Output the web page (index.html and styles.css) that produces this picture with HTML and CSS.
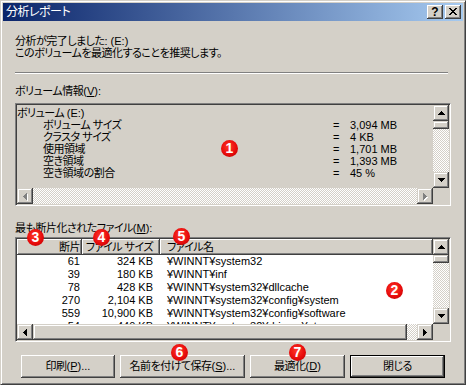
FILE: index.html
```
<!DOCTYPE html>
<html lang="ja">
<head>
<meta charset="utf-8">
<title>分析レポート</title>
<link rel="stylesheet" href="styles.css">
</head>
<body>
<div class="window">
  <div class="titlebar">
    <span class="title">分析レポート</span>
    <div class="caps">
      <div class="cap help">?</div>
      <div class="cap close">
        <svg width="8" height="7" viewBox="0 0 8 7" shape-rendering="crispEdges"><path d="M0 0h2v1h-2zM6 0h2v1h-2zM1 1h2v1h-2zM5 1h2v1h-2zM2 2h4v1h-4zM3 3h2v1h-2zM2 4h4v1h-4zM1 5h2v1h-2zM5 5h2v1h-2zM0 6h2v1h-2zM6 6h2v1h-2z" fill="#000"/></svg>
      </div>
    </div>
  </div>
  <div class="client">
    <p class="msg">分析が完了しました<span class="en">: (E:)</span><br>このボリュームを最適化することを推奨します。</p>
    <div class="sep"></div>
    <div class="label">ボリューム情報<span class="en">(<u>V</u>):</span></div>
    <div class="field vol">
      <div class="field-body vol-body">
        <div class="vol-line">ボリューム <span class="en">(E:)</span></div>
        <div class="vol-row"><span class="k">ボリューム サイズ</span><span class="en">=</span><span class="en">3,094 MB</span></div>
        <div class="vol-row"><span class="k">クラスタ サイズ</span><span class="en">=</span><span class="en">4 KB</span></div>
        <div class="vol-row"><span class="k">使用領域</span><span class="en">=</span><span class="en">1,701 MB</span></div>
        <div class="vol-row"><span class="k">空き領域</span><span class="en">=</span><span class="en">1,393 MB</span></div>
        <div class="vol-row"><span class="k">空き領域の割合</span><span class="en">=</span><span class="en">45 %</span></div>
      </div>
      <div class="vscroll">
        <div class="sbtn"><svg width="7" height="4" viewBox="0 0 7 4" shape-rendering="crispEdges"><path d="M3 0h1v1h-1zM2 1h3v1h-3zM1 2h5v1h-5zM0 3h7v1h-7z" fill="#000"/></svg></div>
        <div class="sbtn thumb-v"></div>
        <div class="track"></div>
        <div class="sbtn"><svg width="7" height="4" viewBox="0 0 7 4" shape-rendering="crispEdges"><path d="M0 0h7v1h-7zM1 1h5v1h-5zM2 2h3v1h-3zM3 3h1v1h-1z" fill="#000"/></svg></div>
      </div>
      <div class="hscroll">
        <div class="sbtn"><svg width="6" height="9" viewBox="0 0 6 9" shape-rendering="crispEdges"><path d="M3 0h1v1h-1zM2 1h2v1h-2zM1 2h3v1h-3zM0 3h4v1h-4zM1 4h3v1h-3zM2 5h2v1h-2zM3 6h1v1h-1z" fill="#fff" transform="translate(2,2)"/><path d="M3 0h1v1h-1zM2 1h2v1h-2zM1 2h3v1h-3zM0 3h4v1h-4zM1 4h3v1h-3zM2 5h2v1h-2zM3 6h1v1h-1z" fill="#808080" transform="translate(1,1)"/></svg></div>
        <div class="track"></div>
        <div class="sbtn"><svg width="6" height="9" viewBox="0 0 6 9" shape-rendering="crispEdges"><path d="M0 0h1v1h-1zM0 1h2v1h-2zM0 2h3v1h-3zM0 3h4v1h-4zM0 4h3v1h-3zM0 5h2v1h-2zM0 6h1v1h-1z" fill="#fff" transform="translate(2,2)"/><path d="M0 0h1v1h-1zM0 1h2v1h-2zM0 2h3v1h-3zM0 3h4v1h-4zM0 4h3v1h-3zM0 5h2v1h-2zM0 6h1v1h-1z" fill="#808080" transform="translate(1,1)"/></svg></div>
      </div>
      <div class="corner"></div>
    </div>

    <div class="label label2">最も断片化されたファイル<span class="en">(<u>M</u>):</span></div>
    <div class="field list">
      <div class="field-body list-body">
        <div class="lrow head">
          <div class="hc c1">断片</div>
          <div class="hc c2">ファイル サイズ</div>
          <div class="hc c3">ファイル名</div>
        </div>
        <div class="lrow"><span class="c1">61</span><span class="c2">324 KB</span><span class="c3">¥WINNT¥system32</span></div>
        <div class="lrow"><span class="c1">39</span><span class="c2">180 KB</span><span class="c3">¥WINNT¥inf</span></div>
        <div class="lrow"><span class="c1">78</span><span class="c2">428 KB</span><span class="c3">¥WINNT¥system32¥dllcache</span></div>
        <div class="lrow"><span class="c1">270</span><span class="c2">2,104 KB</span><span class="c3">¥WINNT¥system32¥config¥system</span></div>
        <div class="lrow"><span class="c1">559</span><span class="c2">10,900 KB</span><span class="c3">¥WINNT¥system32¥config¥software</span></div>
        <div class="lrow"><span class="c1">54</span><span class="c2">440 KB</span><span class="c3">¥WINNT¥system32¥drivers¥etc</span></div>
      </div>
      <div class="vscroll">
        <div class="sbtn"><svg width="7" height="4" viewBox="0 0 7 4" shape-rendering="crispEdges"><path d="M3 0h1v1h-1zM2 1h3v1h-3zM1 2h5v1h-5zM0 3h7v1h-7z" fill="#000"/></svg></div>
        <div class="sbtn thumb-v"></div>
        <div class="track"></div>
        <div class="sbtn"><svg width="7" height="4" viewBox="0 0 7 4" shape-rendering="crispEdges"><path d="M0 0h7v1h-7zM1 1h5v1h-5zM2 2h3v1h-3zM3 3h1v1h-1z" fill="#000"/></svg></div>
      </div>
      <div class="hscroll">
        <div class="sbtn"><svg width="4" height="7" viewBox="0 0 4 7" shape-rendering="crispEdges"><path d="M3 0h1v1h-1zM2 1h2v1h-2zM1 2h3v1h-3zM0 3h4v1h-4zM1 4h3v1h-3zM2 5h2v1h-2zM3 6h1v1h-1z" fill="#000"/></svg></div>
        <div class="sbtn thumb-h"></div>
        <div class="track"></div>
        <div class="sbtn"><svg width="4" height="7" viewBox="0 0 4 7" shape-rendering="crispEdges"><path d="M0 0h1v1h-1zM0 1h2v1h-2zM0 2h3v1h-3zM0 3h4v1h-4zM0 4h3v1h-3zM0 5h2v1h-2zM0 6h1v1h-1z" fill="#000"/></svg></div>
      </div>
      <div class="corner"></div>
    </div>

    <div class="buttons">
      <div class="btn w94">印刷<span class="en">(<u>P</u>)...</span></div>
      <div class="btn w125">名前を付けて保存<span class="en">(<u>S</u>)...</span></div>
      <div class="btn w95">最適化<span class="en">(<u>D</u>)</span></div>
      <div class="btn w95 default">閉じる</div>
    </div>
  </div>

  <span class="mark m1">1</span>
  <span class="mark m2">2</span>
  <span class="mark m3">3</span>
  <span class="mark m4">4</span>
  <span class="mark m5">5</span>
  <span class="mark m6">6</span>
  <span class="mark m7">7</span>
</div>
</body>
</html>
```
FILE: styles.css
```
* { box-sizing: border-box; margin: 0; padding: 0; }

html, body {
  width: 466px;
  height: 385px;
  overflow: hidden;
}

body {
  font-family: "Liberation Sans", "Noto Sans CJK JP", sans-serif;
  font-feature-settings: "palt";
  font-size: 11px;
  letter-spacing: -0.5px;
  color: #000;
  background: #D4D0C8;
}

.en { font-size: 11px; letter-spacing: 0; }

u { text-decoration: underline; text-underline-offset: 1px; }

.window {
  position: relative;
  width: 466px;
  height: 385px;
  background: #D4D0C8;
  border: 1px solid;
  border-color: #D4D0C8 #404040 #404040 #D4D0C8;
  box-shadow: inset 1px 1px #fff, inset -1px -1px #808080;
  padding: 2px;
  display: flex;
  flex-direction: column;
}

/* title bar */
.titlebar {
  height: 18px;
  flex: none;
  background: linear-gradient(to right, #0A246A, #A6CAF0);
  color: #fff;
  display: flex;
  align-items: center;
  padding: 0 2px;
}
.title { line-height: 13px; padding-left: 1px; font-size: 12px; letter-spacing: -0.5px; }
.caps { margin-left: auto; display: flex; gap: 2px; }
.cap {
  width: 16px;
  height: 14px;
  background: #D4D0C8;
  box-shadow: inset -1px -1px #404040, inset 1px 1px #fff, inset -2px -2px #808080;
  display: flex;
  align-items: center;
  justify-content: center;
  color: #000;
}
.help {
  font-weight: bold;
  font-size: 12px;
  line-height: 12px;
  letter-spacing: 0;
  padding-bottom: 1px;
}
.close svg { display: block; margin-bottom: 1px; }

/* client area */
.client {
  flex: 1;
  display: flex;
  flex-direction: column;
  padding: 0 12px;
}

.msg { margin-top: 14px; line-height: 12px; }

.sep {
  margin-top: 13px;
  margin-right: 3px;
  height: 2px;
  border-top: 1px solid #808080;
  border-bottom: 1px solid #fff;
}

.label { margin-top: 11px; line-height: 13px; }
.label2 { margin-top: 16px; }

/* sunken field with scrollbars */
.field {
  display: grid;
  grid-template-columns: 1fr 16px;
  grid-template-rows: 1fr 16px;
  border: 1px solid;
  border-color: #808080 #fff #fff #808080;
  box-shadow: inset 1px 1px #404040, inset -1px -1px #D4D0C8;
  padding: 1px;
}
.vol { margin-top: 5px; height: 103px; }
.list { margin-top: 2px; height: 105px; }

.field-body { overflow: hidden; min-width: 0; min-height: 0; }

.vscroll { display: flex; flex-direction: column; }
.hscroll { display: flex; }
.corner { background: #D4D0C8; }

.sbtn {
  flex: none;
  width: 16px;
  height: 16px;
  background: #D4D0C8;
  box-shadow: inset -1px -1px #404040, inset 1px 1px #D4D0C8, inset -2px -2px #808080, inset 2px 2px #fff;
  display: flex;
  align-items: center;
  justify-content: center;
}
.sbtn svg { display: block; }
.thumb-v { height: 8px; }
.thumb-h { width: 374px; }

.track {
  flex: 1;
  background-color: #D4D0C8;
  background-image: conic-gradient(#fff 0 25%, #D4D0C8 0 50%, #fff 0 75%, #D4D0C8 0);
  background-size: 2px 2px;
}

/* volume info */
.vol-body { background: #D4D0C8; padding-top: 2px; }
.vol-line, .vol-row { line-height: 12px; white-space: nowrap; }
.vol-row {
  display: grid;
  grid-template-columns: 316px 17px auto;
}
.vol-row .k { padding-left: 26px; }

/* list view */
.list-body { background: #fff; }
.lrow {
  display: grid;
  grid-template-columns: 65px 78px 1fr;
  line-height: 13px;
  white-space: nowrap;
}
.lrow span { font-size: 11px; letter-spacing: 0; }
.lrow.head {
  height: 16px;
  background: #D4D0C8;
}
.hc {
  line-height: 15px;
  padding-top: 1px;
  box-shadow: inset -1px -1px #404040, inset 1px 1px #fff, inset -2px -2px #808080;
}
.c1 { text-align: right; padding-right: 2px; }
.c2 { text-align: right; padding-right: 7px; }
.c3 { text-align: left; padding-left: 7px; overflow: hidden; }

/* buttons */
.buttons {
  display: flex;
  gap: 5px;
  margin-top: 13px;
  padding-left: 6px;
}
.btn {
  height: 23px;
  display: flex;
  align-items: center;
  justify-content: center;
  background: #D4D0C8;
  line-height: 13px;
  white-space: nowrap;
  box-shadow: inset -1px -1px #404040, inset 1px 1px #fff, inset -2px -2px #808080;
}
.btn.default {
  border: 1px solid #000;
}
.w94 { width: 94px; }
.w95 { width: 95px; }
.w125 { width: 125px; }

/* callout markers */
.mark {
  position: absolute;
  width: 17px;
  height: 17px;
  margin: -8px 0 0 -8px;
  border-radius: 50%;
  background: radial-gradient(circle at 45% 40%, #ff3a2a 0, #e80c0c 55%, #b00000 100%);
  color: #fff;
  font-weight: bold;
  font-size: 14px;
  letter-spacing: 0;
  line-height: 17px;
  text-align: center;
}
.m1 { left: 228px; top: 147px; }
.m2 { left: 393px; top: 289px; }
.m3 { left: 34px; top: 236px; }
.m4 { left: 100px; top: 236px; }
.m5 { left: 180px; top: 235px; }
.m6 { left: 178px; top: 351px; }
.m7 { left: 296px; top: 351px; }
```
